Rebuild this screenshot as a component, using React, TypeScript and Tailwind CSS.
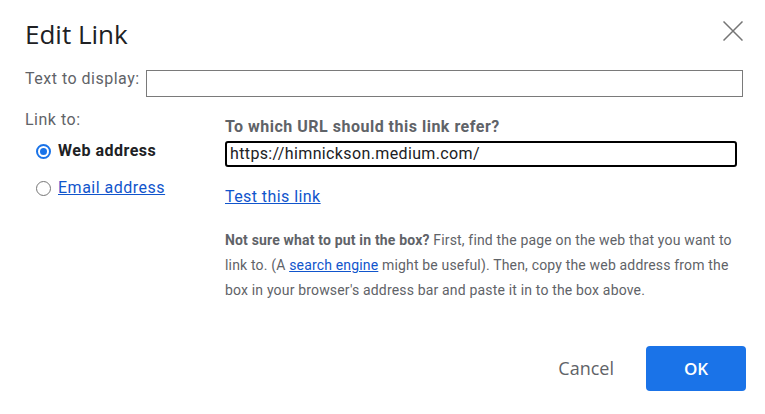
import React from 'react';

const body = { fontFamily: 'Roboto, "Liberation Sans", sans-serif' };
const display = { fontFamily: '"Open Sans", Roboto, sans-serif' };

const Radio: React.FC<{ checked?: boolean }> = ({ checked }) =>
  checked ? (
    <span className="flex h-[15px] w-[15px] shrink-0 items-center justify-center rounded-full border-2 border-[#1a73e8]">
      <span className="h-[7px] w-[7px] rounded-full bg-[#1a73e8]" />
    </span>
  ) : (
    <span className="h-[15px] w-[15px] shrink-0 rounded-full border border-[#767676]" />
  );

export default function App() {
  return (
    <div className="flex h-[414px] w-[765px] flex-col bg-white pl-[25px]" style={body}>
      {/* header */}
      <div className="flex items-start justify-between pr-[22px] pt-[18px]">
        <h1 className="text-[26px] font-normal leading-[32px] text-[#202124]" style={display}>
          Edit Link
        </h1>
        <button type="button" aria-label="Close" className="mt-[3px] h-5 w-5">
          <svg viewBox="0 0 20 20" width="20" height="20" fill="none" stroke="#757575" strokeWidth="1.5">
            <path d="M0.5 0.5 L19.5 19.5 M19.5 0.5 L0.5 19.5" />
          </svg>
        </button>
      </div>

      {/* text to display */}
      <div className="mt-[20px] flex items-start gap-[6px] pr-[22px]">
        <label className="-mt-px text-[16px] leading-[20px] tracking-[0.5px] text-[#5f6368]">Text to display:</label>
        <input className="h-[27px] flex-1 border border-[#7a7a7a] bg-white px-1 outline-none" />
      </div>

      <div className="flex">
        {/* left column */}
        <div className="w-[200px] pt-[13px]">
          <div className="text-[16px] leading-[20px] tracking-[0.5px] text-[#5f6368]">Link to:</div>
          <div className="mt-[9px] flex h-6 items-center gap-[7px] pl-[11px]">
            <Radio checked />
            <span className="text-[16px] font-bold tracking-[0.5px] text-[#202124]">Web address</span>
          </div>
          <div className="mt-[13px] flex h-6 items-center gap-[7px] pl-[11px]">
            <Radio />
            <a className="text-[16px] tracking-[0.5px] text-[#1155cc] underline">Email address</a>
          </div>
        </div>

        {/* right column */}
        <div className="w-[512px] pt-[20px]">
          <div className="text-[16px] font-bold leading-[20px] tracking-[0.5px] text-[#5f6368]">
            To which URL should this link refer?
          </div>
          <div className="mt-[4px] flex h-[26px] items-center rounded-[3px] border-2 border-black px-[3px] text-[16px] tracking-[0.37px] text-[#202124]">
            https://himnickson.medium.com/
          </div>
          <a className="mt-[20px] block text-[16px] leading-[20px] tracking-[0.43px] text-[#1155cc] underline">
            Test this link
          </a>
          <p className="mt-[21px] text-[14px] leading-[25px] tracking-[0.17px] text-[#5f6368]">
            <b className="font-bold text-[#5f6368]">Not sure what to put in the box?</b> First, find the page on the web
            that you want to link to. (A <a className="text-[#1155cc] underline">search engine</a> might be useful).
            Then, copy the web address from the box in your browser's address bar and paste it in to the box above.
          </p>
        </div>
      </div>

      {/* footer */}
      <div className="mt-auto flex items-center justify-end gap-[32px] pb-[23px] pr-[19px]">
        <button type="button" className="text-[18px] font-medium text-[#5f6368]" style={display}>
          Cancel
        </button>
        <button
          type="button"
          className="h-[45px] w-[100px] rounded-[4px] bg-[#1a73e8] text-[17px] font-semibold text-white"
          style={display}
        >
          OK
        </button>
      </div>
    </div>
  );
}
